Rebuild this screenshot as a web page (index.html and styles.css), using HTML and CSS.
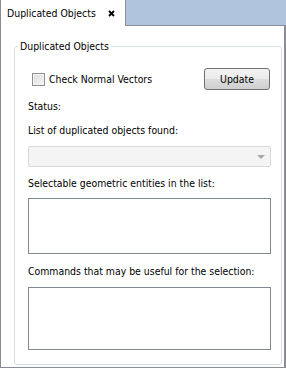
FILE: index.html
```html
<!DOCTYPE html>
<html lang="en">
<head>
    <meta charset="UTF-8">
    <title>Duplicated Objects</title>
    <link rel="stylesheet" href="styles.css">
</head>
<body>
    <!-- tab strip -->
    <div class="tabbar">
        <div class="tab">
            <span>Duplicated Objects</span>
            <svg class="close" width="7" height="7" viewBox="0 0 7 7">
                <path d="M1 1 L6 6 M6 1 L1 6" stroke="#000" stroke-width="1.8" fill="none"/>
            </svg>
        </div>
        <div class="tab-filler"></div>
    </div>

    <!-- panel -->
    <div class="panel">
        <fieldset class="group">
            <legend>Duplicated Objects</legend>

            <div class="check-row">
                <label class="check"><span class="box"></span>Check Normal Vectors</label>
                <button class="btn">Update</button>
            </div>

            <p class="status">Status:</p>
            <p class="label">List of duplicated objects found:</p>
            <div class="combo"><span class="arrow"></span></div>

            <p class="label">Selectable geometric entities in the list:</p>
            <div class="listbox list-entities"></div>

            <p class="label">Commands that may be useful for the selection:</p>
            <div class="listbox list-commands"></div>
        </fieldset>
    </div>
</body>
</html>
```

FILE: styles.css
```css
html, body {
    margin: 0;
    padding: 0;
    width: 286px;
    height: 368px;
    overflow: hidden;
    background: #fff;
    font-family: "DejaVu Sans Condensed", "Liberation Sans", sans-serif;
    font-size: 10.4px;
    color: #000;
}

/* tab strip */
.tabbar {
    display: flex;
    height: 26px;
}

.tab {
    width: 126px;
    display: flex;
    align-items: center;
    gap: 12px;
    padding-left: 6px;
    box-sizing: border-box;
    border-left: 1px solid #898c95;
    border-right: 1px solid #898c95;
    background: #fff;
}

.close {
    margin-top: 1px;
}

.tab-filler {
    flex: 1;
    background: #b0c4de;
    border-bottom: 1px solid #898c95;
}

/* main panel */
.panel {
    height: 342px;
    box-sizing: border-box;
    border-left: 1px solid #898c95;
    border-right: 2px solid #898c95;
    border-bottom: 1px solid #898c95;
    padding: 14px 2px 2px 13px;
}

.group {
    margin: 0;
    height: 100%;
    box-sizing: border-box;
    border: 1px solid #d5dfe5;
    border-radius: 3px;
    padding: 15px 10px 13px 13px;
    min-width: 0;
}

.group legend {
    margin-left: -10px;
    padding: 0 2px;
    line-height: 13px;
}

.check-row {
    display: flex;
    align-items: center;
    justify-content: space-between;
    padding-right: 1px;
}

.check {
    display: flex;
    align-items: center;
    gap: 4px;
    padding-left: 4px;
}

.box {
    width: 11px;
    height: 11px;
    border: 1px solid #8f8f8f;
    background: linear-gradient(135deg, #dcdcdc, #f6f6f6);
    box-shadow: inset 0 0 0 1px #f4f4f4;
}

.btn {
    width: 66px;
    height: 22px;
    font: inherit;
    color: #000;
    border: 1px solid #707070;
    border-radius: 3px;
    background: linear-gradient(#f2f2f2 0%, #ebebeb 50%, #dddddd 51%, #cfcfcf 100%);
    padding: 0;
}

p {
    margin: 0;
    line-height: 13px;
}

.status {
    margin-top: 10px;
}

.label {
    margin-top: 11px;
}

.combo {
    margin-top: 9px;
    height: 21px;
    box-sizing: border-box;
    border: 1px solid #d9d9d9;
    border-radius: 2px;
    background: #f4f4f4;
    position: relative;
}

.arrow {
    position: absolute;
    right: 5px;
    top: 8px;
    border-left: 4px solid transparent;
    border-right: 4px solid transparent;
    border-top: 4px solid #a8a8a8;
}

.combo + .label {
    margin-top: 10px;
}

.listbox {
    margin-top: 8px;
    box-sizing: border-box;
    border: 1px solid #828790;
    background: #fff;
}

.list-entities {
    height: 56px;
}

.list-commands {
    height: 63px;
    margin-top: 9px;
}
```
